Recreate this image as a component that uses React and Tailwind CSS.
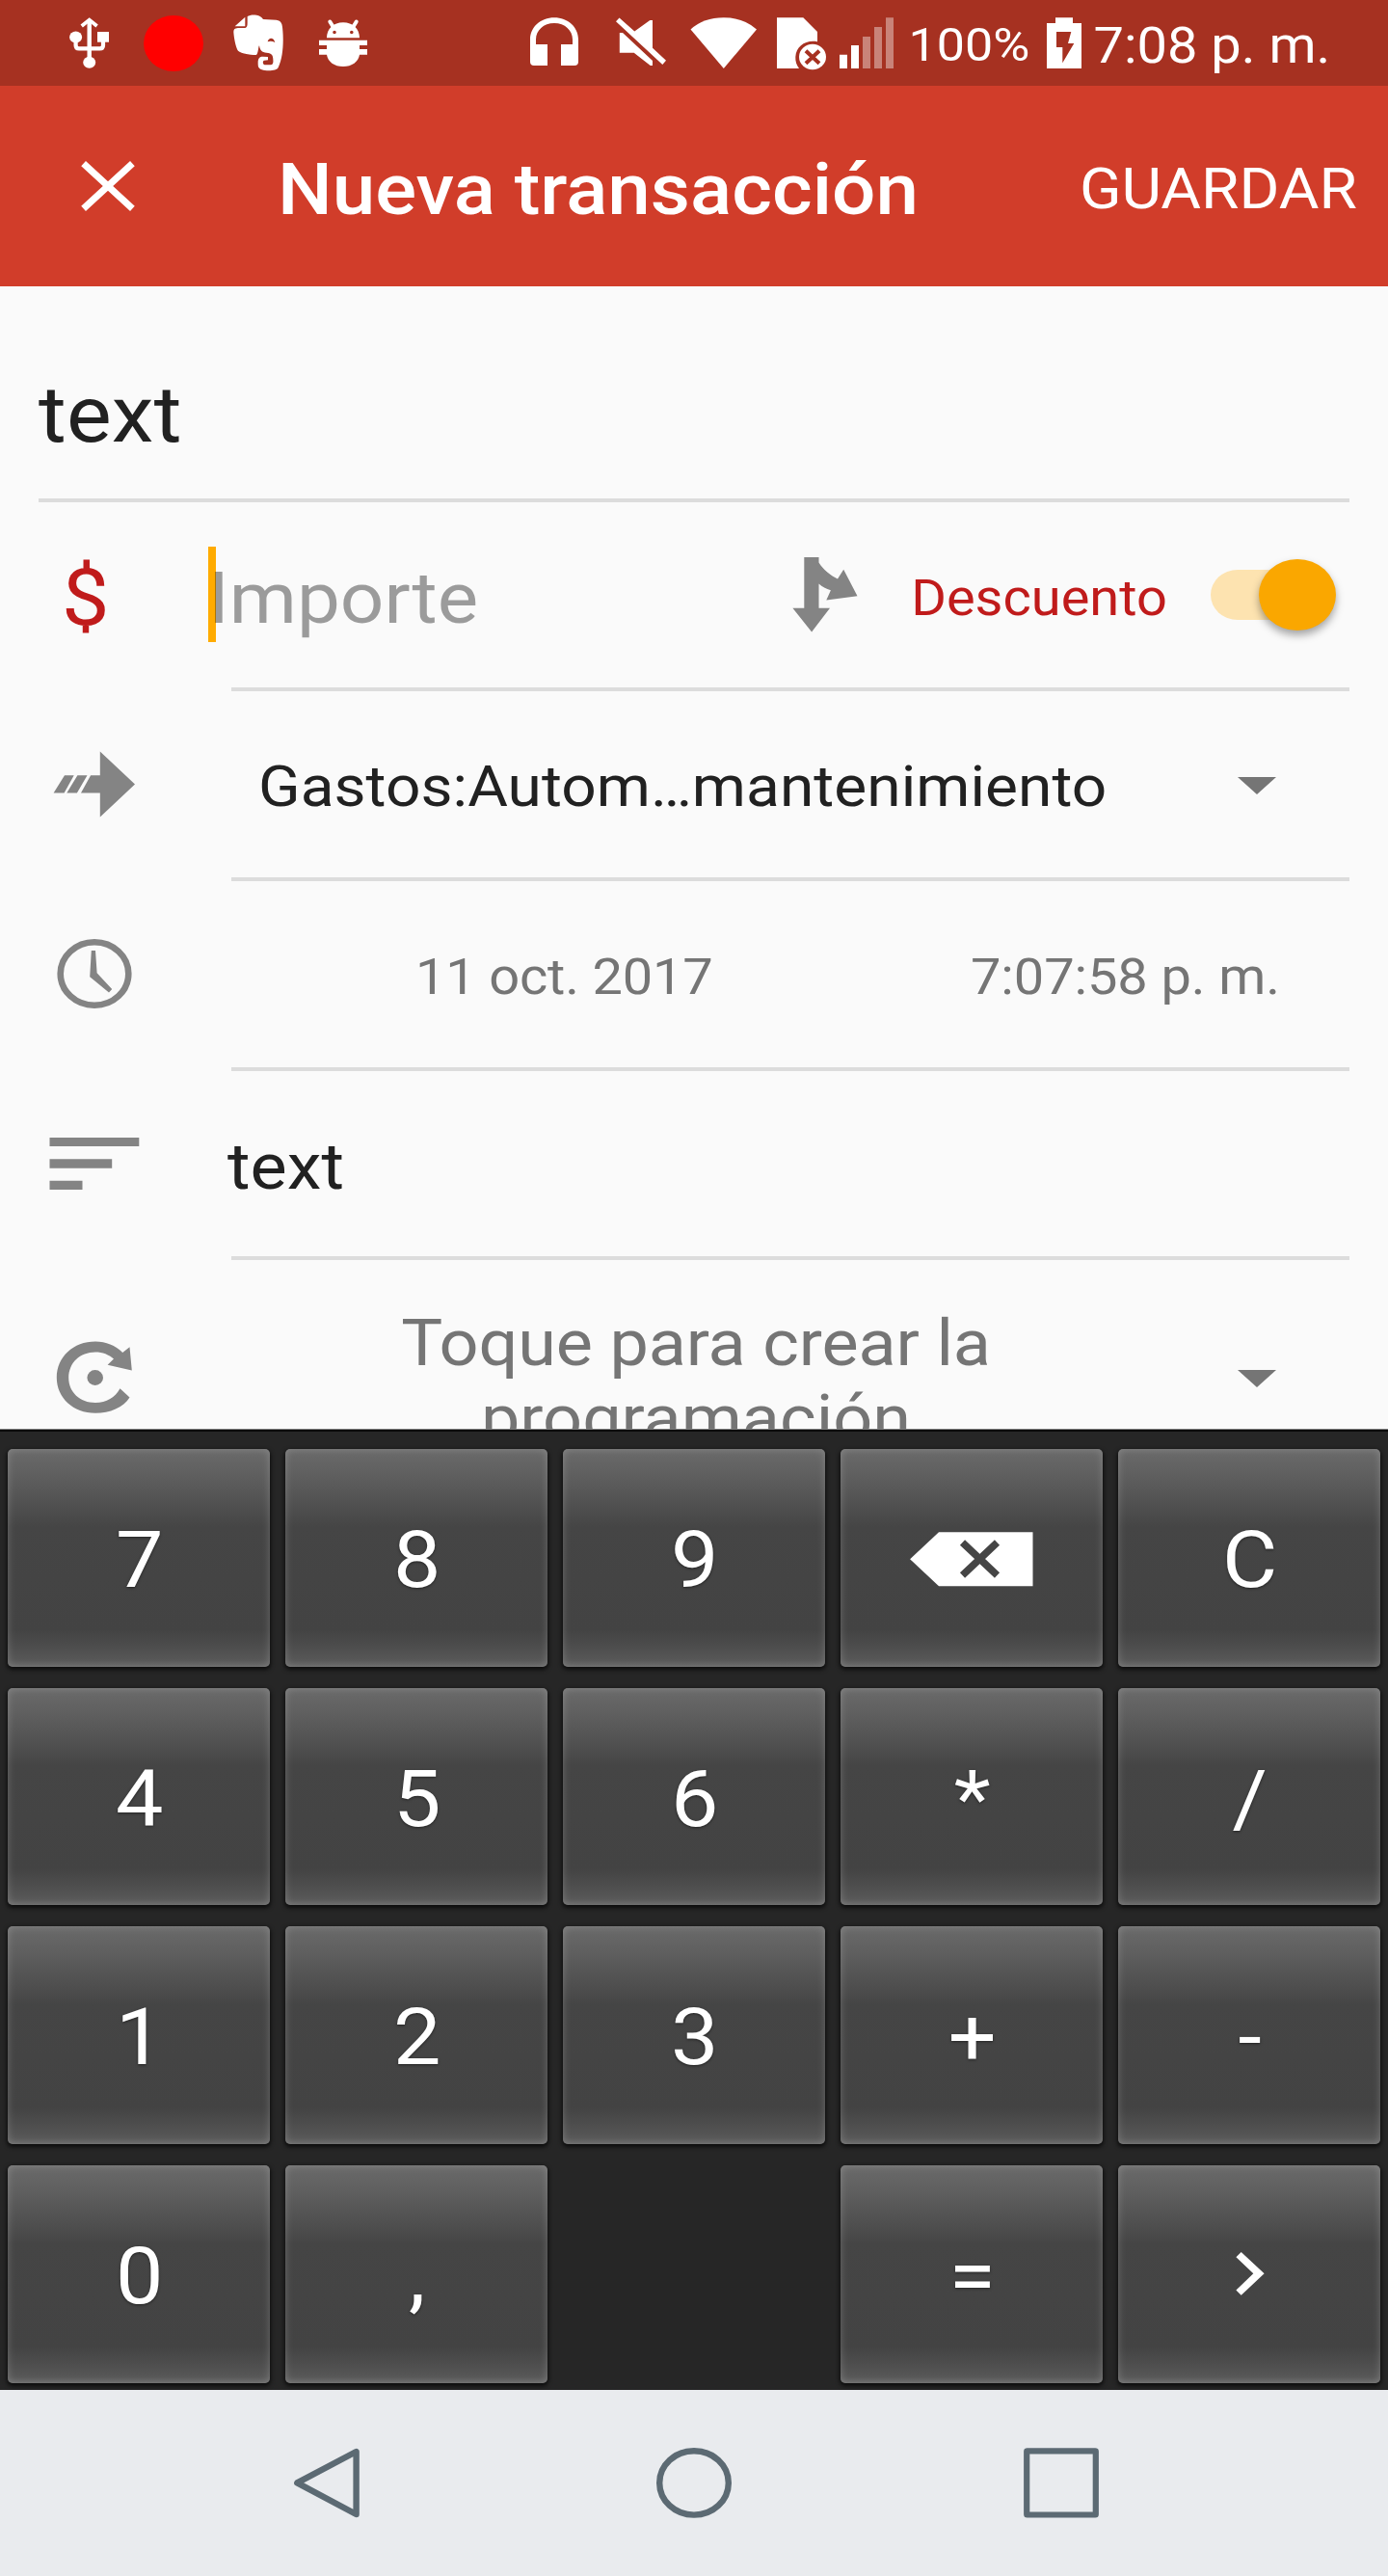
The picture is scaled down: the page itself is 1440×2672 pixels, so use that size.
import React from "react";

// Vector drawing whose viewBox has the same size as its box on screen.
function Glyph({ box, className = "", children }) {
  const [, , w, h] = box.split(" ");
  return (
    <svg viewBox={box} width={w} height={h} className={"block shrink-0 " + className} aria-hidden="true">
      {children}
    </svg>
  );
}

// Slightly flattened label, as the whole screen has non-square pixels.
function Label({ className = "", children }) {
  return <span className={"block shrink-0 scale-y-[0.928] whitespace-nowrap " + className}>{children}</span>;
}

function StatusBar() {
  return (
    <header className="flex h-[89px] items-start bg-[#a63121] text-white">
      <Glyph box="71 17 43 56" className="ml-[71px] mt-[17px]">
        <g fill="currentColor">
          <ellipse cx="78.6" cy="38.4" rx="6.5" ry="6" />
          <ellipse cx="92.7" cy="64.8" rx="6.5" ry="6" />
          <rect x="101" y="33" width="12" height="10.7" />
          <rect x="90.5" y="22" width="4.4" height="40" />
        </g>
        <path d="M84.7 27 L92.7 20.6 L100.6 27" fill="none" stroke="currentColor" strokeWidth="3.8" />
        <path
          d="M78.6 38 V47 Q78.6 50.4 82 50.4 H103.5 Q107 50.4 107 47 V40"
          fill="none"
          stroke="currentColor"
          strokeWidth="4.2"
        />
      </Glyph>
      <div className="ml-[35px] mt-[15.5px] h-[58px] w-[62px] rounded-[50%] bg-[#ff0000]" />
      <Glyph box="241 14 54 61" className="ml-[30px] mt-[14px]">
        <g transform="scale(0.33333)" fill="currentColor">
          <path d="M731 82 L763 53 V82 Z" />
          <path
            fillRule="evenodd"
            d="M770 51 C780 44 810 43 819 60 L860 62 C876 64 879 74 880 95 C883 130 881 180 866 210 C862 221 830 222 815 217 C803 213 803 205 803 195 C803 181 808 176 818 176 L834 177 V187 L822 188 C817 190 817 201 824 202 L842 202 C850 201 851 195 850 185 C850 172 845 167 835 165 C820 163 810 163 807 142 C804 142 804 170 797 171 C780 171 750 167 741 158 C733 148 728 115 727 100 C727 89 733 87 745 87 H760 C768 87 770 82 770 72 Z M833 130 C836 115 852 115 856 132 C848 128 840 127 833 130 Z"
          />
        </g>
      </Glyph>
      <Glyph box="330 19 52 51" className="ml-[35px] mt-[19px]">
        <g fill="currentColor">
          <path
            fillRule="evenodd"
            d="M339 39.3 C339 30 346 23.3 356 23.3 C366 23.3 373 30 373 39.3 Z M347 31.8 a1.8 1.7 0 1 0 0 3.4 a1.8 1.7 0 1 0 0 -3.4 M364.8 31.8 a1.8 1.7 0 1 0 0 3.4 a1.8 1.7 0 1 0 0 -3.4"
          />
          <path d="M331 41.7 H381 V47 H373 V51 H381 V56.7 H373 C372 64 365 69 356 69 C347 69 340 64 339 56.7 H331 V51 H339 V47 H331 Z" />
        </g>
        <path
          d="M342.3 22.5 L346 28.5 M369.7 22.5 L366 28.5"
          stroke="currentColor"
          strokeWidth="4"
          strokeLinecap="round"
        />
      </Glyph>
      <Glyph box="550 18 50 50" className="ml-[168px] mt-[18px]">
        <path
          fill="currentColor"
          d="M550 64 V41 C550 28 561 18.3 575 18.3 C589 18.3 600 28 600 41 V64 Q600 68 596 68 H582 V46 H594 V41 C594 31.5 586 24 575 24 C564 24 556 31.5 556 41 V46 H568 V68 H554 Q550 68 550 64 Z"
        />
      </Glyph>
      <Glyph box="639 18 53 50" className="ml-[39px] mt-[18px]">
        <path
          fill="currentColor"
          d="M642.5 18.5 L658.3 32.5 L674.3 21 H677 V49.7 L691 62.7 L687.3 67 L639 22.2 Z M642.8 34 H646 L677 63 V68 H674.7 L657.7 54.8 H642.8 Z"
        />
      </Glyph>
      <Glyph box="716 18 69 53" className="ml-[24px] mt-[18px]">
        <path fill="currentColor" d="M716.5 30.5 Q730 18.3 750.8 18.3 Q771.5 18.3 785 30.5 L750.8 71 Z" />
      </Glyph>
      <Glyph box="806 18 52 56" className="ml-[21px] mt-[18px]">
        <path
          fill="currentColor"
          d="M806 18.3 H833.3 L848 33 V43.3 C836 41 826 48 825.3 59 C825 63.5 826.5 67.5 829 71 H806 Z"
        />
        <ellipse cx="843" cy="59" rx="14" ry="13.2" fill="currentColor" />
        <path d="M836 52.7 L850 65.7 M850 52.7 L836 65.7" stroke="#a63121" strokeWidth="4" />
      </Glyph>
      <Glyph box="871 18 56 53" className="ml-[13px] mt-[18px]">
        <path fill="currentColor" d="M871 56.7 h8 V71 h-8 Z M883 47 h8 V71 h-8 Z" />
        <path
          fill="currentColor"
          fillOpacity="0.4"
          d="M895 38 h8 V71 h-8 Z M907 28 h8 V71 h-8 Z M919 18.3 h8 V71 h-8 Z"
        />
      </Glyph>
      <Label className="ml-[15.5px] mt-[16.5px] w-[129.5px] text-[52px] leading-[60px]">100%</Label>
      <Glyph box="1086 18 36 53" className="ml-[14px] mt-[18px]">
        <path
          fill="currentColor"
          fillRule="evenodd"
          d="M1095 18.3 H1113 V24 H1122 V71 H1086 V24 H1095 Z M1096 33 V49 H1102.3 V65.3 L1114.3 45 H1108 L1111.3 33 Z"
        />
      </Glyph>
      <Label className="ml-[12.5px] mt-[17.2px] text-[56px] leading-[60px]">7:08 p. m.</Label>
    </header>
  );
}

function AppBar() {
  return (
    <div className="flex h-[208px] items-start bg-[#d13d2a] text-white">
      <Glyph box="84 167 56 52" className="ml-[84px] mt-[78px]">
        <path d="M86.6 169.6 L137.4 216.4 M137.4 169.6 L86.6 216.4" stroke="currentColor" strokeWidth="7" />
      </Glyph>
      <Label className="ml-[148px] mt-[58px] text-[80px] font-medium leading-[100px]">Nueva transacción</Label>
      <Label className="ml-auto mr-[32px] mt-[57.5px] text-[64px] leading-[100px]">GUARDAR</Label>
    </div>
  );
}

function Divider({ className = "" }) {
  return <div className={"mr-10 h-1 shrink-0 bg-[#dcdcdc] " + className} />;
}

function Caret({ className = "" }) {
  return (
    <Glyph box="0 0 40 18" className={"ml-auto mr-[116px] " + className}>
      <path d="M0 0 H40 L20 18 Z" fill="#757575" />
    </Glyph>
  );
}

function Form() {
  return (
    <main className="flex h-[1185px] flex-col overflow-hidden bg-[#fafafa] text-[#212121]">
      <div className="flex h-[220px] shrink-0 items-start">
        <Label className="ml-10 mt-[82.5px] text-[88px] leading-[100px] tracking-[0.2px]">text</Label>
      </div>
      <Divider className="ml-10" />

      <div className="flex h-[192px] shrink-0 items-start">
        <Label className="ml-[64px] mt-[48.6px] w-[152px] text-[88px] leading-[100px] text-[#c01b1b]">$</Label>
        <div className="relative w-[606px]">
          <div className="absolute left-0 top-[46px] h-[99px] w-2 bg-[#ffab00]" />
          <Label className="relative mt-[49.5px] text-[80px] leading-[100px] text-black/[0.38]">Importe</Label>
        </div>
        <Glyph box="822 577 68 79" className="mt-[56px]">
          <path
            fill="#848484"
            d="M834.3 578 H849.5 V583.5 C854 591 862 597 869 600.5 L875.2 590.7 L889.5 618.3 L857.3 622.5 L861.9 612.3 C857 611 853 608.5 849.5 605.5 V630.7 H861 L842.1 655.5 L822.4 630.7 H834.3 Z"
          />
        </Glyph>
        <Label className="ml-auto mt-[68.7px] text-[56px] leading-[60px] text-[#c01b1b]">Descuento</Label>
        <div className="relative ml-[45px] mr-[54px] mt-[70px] h-[52px] w-[130px] rounded-[28px/26px] bg-[linear-gradient(90deg,#fde3b0_70%,transparent_70%)]">
          <div className="absolute right-0 top-[-11px] h-[74px] w-20 rounded-[50%] bg-[#faa700] shadow-[0_5px_8px_rgba(0,0,0,0.35)]" />
        </div>
      </div>
      <Divider className="ml-[240px]" />

      <div className="flex h-[193px] shrink-0 items-start">
        <Glyph box="55 779 86 69" className="ml-[55px] mt-[62px]">
          <path
            fill="#848484"
            d="M103.8 779.4 L140 813.5 L103.8 847.6 V822.5 H84 L94.1 804.2 H103.8 Z M80.4 804.2 H90.5 L79.9 822.5 H69.3 Z M67 804.2 H76.7 L66.6 822.5 H55.6 Z"
          />
        </Glyph>
        <Label className="ml-[127px] mt-[60.2px] text-[64px] leading-[80px] tracking-[0.05px]">
          Gastos:Autom…mantenimiento
        </Label>
        <Caret className="mt-[89px]" />
      </div>
      <Divider className="ml-[240px]" />

      <div className="flex h-[193px] shrink-0 items-start text-[#757575]">
        <Glyph box="59 973 78 74" className="ml-[59px] mt-[59px]">
          <ellipse cx="98" cy="1010" rx="35.3" ry="32.8" fill="none" stroke="#848484" strokeWidth="6.6" />
          <path
            fill="#848484"
            d="M94.8 986 H99 L100.6 1009.3 L116.2 1026 L113 1029.5 L93.2 1013.2 Z"
          />
        </Glyph>
        <Label className="ml-[294px] mt-[69.2px] text-[56px] leading-[60px] tracking-[-0.2px]">11 oct. 2017</Label>
        <Label className="ml-auto mr-[112px] mt-[69.2px] text-[56px] leading-[60px] tracking-[-0.1px]">
          7:07:58 p. m.
        </Label>
      </div>
      <Divider className="ml-[240px]" />

      <div className="flex h-[192px] shrink-0 items-start">
        <Glyph box="51 1180 94 54" className="ml-[51px] mt-[69px]">
          <path
            fill="#848484"
            d="M51.5 1180 H144.3 V1189 H51.5 Z M51.5 1202.2 H116.2 V1211.8 H51.5 Z M51.5 1224.7 H85.5 V1234 H51.5 Z"
          />
        </Glyph>
        <Label className="ml-[91px] mt-[60px] text-[72px] leading-[80px]">text</Label>
      </div>
      <Divider className="ml-[240px]" />

      <div className="flex h-[230px] shrink-0 items-start text-[#757575]">
        <Glyph box="58 1391 80 76" className="ml-[58px] mt-[84px]">
          <ellipse cx="98.7" cy="1429" rx="8.3" ry="7.9" fill="#848484" />
          <path
            fill="#848484"
            d="M134.5 1449.5 C128 1460 114 1465.8 99 1465.8 C76 1465.8 58.8 1450 58.8 1429 C58.8 1407.5 76 1391.5 99 1391.5 C110 1391.5 119.5 1395.5 127.2 1403 L134.5 1397.2 L136.8 1421.5 L111.6 1415.7 L118 1409.5 C113 1405 106.5 1402.4 99 1402.4 C83 1402.4 71.2 1413.5 71.2 1429 C71.2 1444 83 1455 99 1455 C110.5 1455 119.5 1449.5 124.5 1440.3 Z"
          />
        </Glyph>
        <div className="ml-[99px] mt-[46.7px] flex w-[970px] flex-col items-center text-[72px] leading-[80px]">
          <Label className="tracking-[-0.15px]">Toque para crear la</Label>
          <Label className="-mt-[1.7px]">programación</Label>
        </div>
        <Caret className="mt-[114px]" />
      </div>
    </main>
  );
}

function Key({ children }) {
  return (
    <button
      type="button"
      className="flex items-center justify-center rounded-[5px] bg-[linear-gradient(180deg,#6a6a6a_0%,#5f5f5f_12%,#505050_26%,#454545_36%,#434343_83%,#4c4c4c_90%,#575757_97%,#606060_100%)] text-[88px] leading-[100px] text-white shadow-[inset_0_0_9px_rgba(255,255,255,0.22),0_2px_4px_1px_rgba(0,0,0,0.7)]"
    >
      {children}
    </button>
  );
}

function KeyText({ children }) {
  return (
    <Label className="ml-[1.5px] mt-[4.6px] [text-shadow:0_1px_3px_rgba(0,0,0,0.5)]">{children}</Label>
  );
}

function Keypad() {
  return (
    <section className="h-[997px] border-t border-[#7c7c7c] bg-[#262626]">
      <div className="h-[2px] bg-[#0c0c0c]" />
      <div className="mt-[17.75px] grid h-[969px] grid-cols-5 gap-x-4 gap-y-[22px] px-2 [grid-template-rows:repeat(4,minmax(0,1fr))]">
        {["7", "8", "9", "del", "C", "4", "5", "6", "*", "/", "1", "2", "3", "+", "-", "0", ",", "", "=", "next"].map(
          (k, i) => {
            if (k === "") return <div key={i} />;
            if (k === "del")
              return (
                <Key key={i}>
                  <Glyph box="944 1589 128 57" className="mt-[3px]">
                    <path fill="currentColor" d="M944.1 1617.2 L974 1589.3 H1071.5 V1645.3 H974 Z" />
                    <path
                      d="M998.5 1600 L1034.5 1634 M1034.5 1600 L998.5 1634"
                      stroke="#454545"
                      strokeWidth="7.5"
                    />
                  </Glyph>
                </Key>
              );
            if (k === "next")
              return (
                <Key key={i}>
                  <Glyph box="1282 2336 30 45" className="ml-[2px]">
                    <path
                      fill="currentColor"
                      d="M1287.7 2336 L1311.6 2358.3 L1287.7 2380.8 L1282.4 2375.5 L1300.3 2358.3 L1282.4 2341.2 Z"
                    />
                  </Glyph>
                </Key>
              );
            return (
              <Key key={i}>
                <KeyText>{k}</KeyText>
              </Key>
            );
          }
        )}
      </div>
    </section>
  );
}

function NavBar() {
  return (
    <nav className="flex h-[193px] items-center bg-[#e9ebee] text-[#5c6a73]">
      <Glyph box="304 2539 70 73" className="ml-[304px]">
        <path
          d="M308.3 2575.4 L369.6 2543 V2608 Z"
          fill="none"
          stroke="currentColor"
          strokeWidth="6.4"
          strokeLinejoin="round"
        />
      </Glyph>
      <Glyph box="680 2539 80 73" className="ml-[306px]">
        <ellipse cx="720" cy="2575.4" rx="35.8" ry="33.2" fill="none" stroke="currentColor" strokeWidth="6.4" />
      </Glyph>
      <Glyph box="1061 2539 80 73" className="ml-[301px]">
        <rect
          x="1065.2"
          y="2542.3"
          width="71.6"
          height="66.2"
          rx="0.5"
          fill="none"
          stroke="currentColor"
          strokeWidth="6.2"
          strokeLinejoin="round"
        />
      </Glyph>
    </nav>
  );
}

export default function App() {
  return (
    <div className="flex h-[2672px] w-[1440px] flex-col overflow-hidden font-[Roboto,sans-serif]">
      <StatusBar />
      <AppBar />
      <Form />
      <Keypad />
      <NavBar />
    </div>
  );
}
